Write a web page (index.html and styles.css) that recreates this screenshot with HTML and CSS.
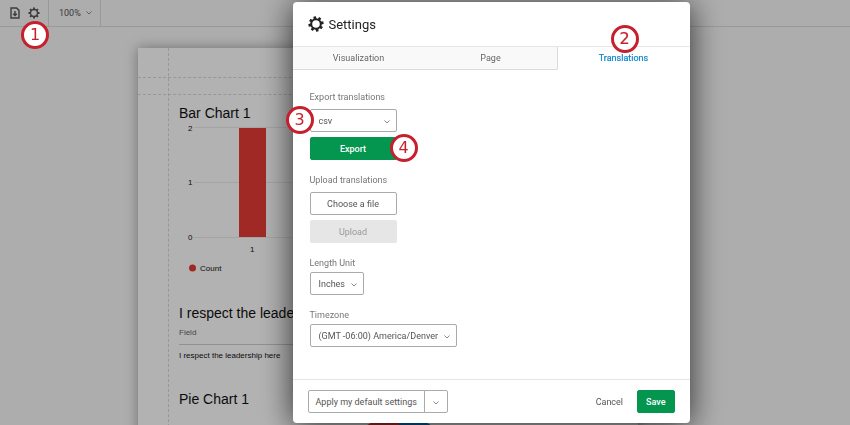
FILE: index.html
```html
<!DOCTYPE html>
<html lang="en">
<head>
    <meta charset="UTF-8">
    <meta name="viewport" content="width=device-width, initial-scale=1.0">
    <title>Report Settings</title>
    <link rel="stylesheet" href="styles.css">
</head>
<body>
    <!-- Report editor -->
    <header class="toolbar">
        <div class="tool-group">
            <button class="icon-btn" type="button" aria-label="Export report">
                <svg width="10" height="12" viewBox="0 0 10 12" fill="none" stroke="#585858" stroke-width="1.4">
                    <path d="M1 1h5.600L9 3.400V11H1z"/>
                    <path d="M5 4v4.400M3.200 6.800L5 8.600l1.800-1.800"/>
                </svg>
            </button>
            <button class="icon-btn" type="button" aria-label="Report settings">
                <svg width="12" height="12" viewBox="0 0 24 24" fill="none" stroke="#585858">
                    <circle cx="12" cy="12" r="7" stroke-width="2.8"/>
                    <path stroke-width="4" d="M12 1v4M12 19v4M1 12h4M19 12h4M4.200 4.200L7 7M17 17l2.800 2.800M4.200 19.800L7 17M17 7l2.800-2.800"/>
                </svg>
            </button>
        </div>
        <div class="tool-group">
            <button class="zoom-btn" type="button">100%
                <svg width="6" height="4" viewBox="0 0 6 4" fill="none" stroke="#888"><path d="M.5.5L3 3 5.500.5"/></svg>
            </button>
        </div>
    </header>

    <main class="canvas">
        <article class="sheet">
            <div class="sheet-content">
                <h2>Bar Chart 1</h2>
                <svg class="bar-chart" width="300" height="152" viewBox="0 0 300 152">
                    <path stroke="#ebebeb" d="M15 5.500h285M15 60.500h285M15 115.500h285"/>
                    <rect x="60" y="6" width="27" height="109" fill="#e53c36"/>
                    <circle cx="13.500" cy="146" r="3.500" fill="#e53c36"/>
                    <text x="9" y="9">2</text>
                    <text x="9" y="63">1</text>
                    <text x="9" y="118">0</text>
                    <text x="71" y="130">1</text>
                    <text x="21" y="149">Count</text>
                </svg>
                <h2>I respect the leader</h2>
                <table class="field-table">
                    <thead><tr><th>Field</th></tr></thead>
                    <tbody><tr><td>I respect the leadership here</td></tr></tbody>
                </table>
                <h2>Pie Chart 1</h2>
                <svg class="pie-chart" width="120" height="120" viewBox="0 0 120 120">
                    <path fill="#e53c36" d="M60 0a60 60 0 0 0 0 120z"/>
                    <path fill="#0a77c9" d="M60 0a60 60 0 0 1 0 120z"/>
                </svg>
            </div>
        </article>
    </main>

    <!-- Settings dialog -->
    <div class="overlay">
        <form class="modal" role="dialog" aria-labelledby="modal-title">
            <header class="modal-header">
                <svg width="16" height="16" viewBox="0 0 24 24" fill="none" stroke="#222">
                    <circle cx="12" cy="12" r="7.200" stroke-width="3"/>
                    <path stroke-width="4" d="M9.900 0.800L10.700 5M13.300 19l.8 4.200M.8 14.100L5 13.300M19 10.700l4.200-.8M2.800 5.700l3.500 2.400M17.700 15.900l3.500 2.400M5.700 21.200l2.400-3.500M15.900 6.300l2.400-3.500"/>
                </svg>
                <h1 id="modal-title">Settings</h1>
            </header>

            <nav class="tabs">
                <a class="tab" href="#visualization">Visualization</a>
                <a class="tab" href="#page">Page</a>
                <a class="tab active" href="#translations">Translations<span class="badge badge-tab">2</span></a>
            </nav>

            <section class="modal-body">
                <div class="group">
                    <label class="group-label spaced" for="format">Export translations</label>
                    <div class="actions">
                        <div class="select-wrap wide">
                            <select id="format"><option>csv</option></select>
                            <svg width="6" height="4" viewBox="0 0 6 4" fill="none" stroke="#888"><path d="M.5.5L3 3 5.500.5"/></svg>
                            <span class="badge badge-select">3</span>
                        </div>
                        <button class="btn btn-primary" type="button">Export<span class="badge badge-export">4</span></button>
                    </div>
                </div>

                <div class="group">
                    <label class="group-label spaced" for="choose-file">Upload translations</label>
                    <div class="actions">
                        <button class="btn" id="choose-file" type="button">Choose a file</button>
                        <button class="btn btn-disabled" type="button" disabled>Upload</button>
                    </div>
                </div>

                <div class="group">
                    <label class="group-label" for="unit">Length Unit</label>
                    <div class="select-wrap">
                        <select id="unit"><option>Inches</option></select>
                        <svg width="6" height="4" viewBox="0 0 6 4" fill="none" stroke="#888"><path d="M.5.5L3 3 5.500.5"/></svg>
                    </div>
                </div>

                <div class="group">
                    <label class="group-label" for="timezone">Timezone</label>
                    <div class="select-wrap">
                        <select id="timezone"><option>(GMT -06:00) America/Denver</option></select>
                        <svg width="6" height="4" viewBox="0 0 6 4" fill="none" stroke="#888"><path d="M.5.5L3 3 5.500.5"/></svg>
                    </div>
                </div>
            </section>

            <footer class="modal-footer">
                <div class="split-btn">
                    <button class="btn" type="button">Apply my default settings</button>
                    <button class="btn" type="button" aria-label="More default settings">
                        <svg width="6" height="4" viewBox="0 0 6 4" fill="none" stroke="#888"><path d="M.5.5L3 3 5.500.5"/></svg>
                    </button>
                </div>
                <div class="confirm">
                    <button class="btn btn-link" type="button">Cancel</button>
                    <button class="btn btn-primary" type="submit">Save</button>
                </div>
            </footer>
        </form>
    </div>

    <span class="badge badge-toolbar">1</span>
</body>
</html>
```
FILE: styles.css
```css
* {
    box-sizing: border-box;
}

body {
    margin: 0;
    height: 100vh;
    overflow: hidden;
    display: flex;
    flex-direction: column;
    background: #f8f8f8;
    font-family: Roboto, "Liberation Sans", sans-serif;
    font-size: 9px;
    color: #555;
}

button, select {
    font: inherit;
    color: inherit;
    cursor: pointer;
}

h1, h2 {
    margin: 0;
    font-weight: normal;
}

/* Toolbar */
.toolbar {
    display: flex;
    flex: none;
    height: 27px;
    border-bottom: 1px solid #dcdcdc;
}

.tool-group {
    display: flex;
    align-items: center;
    gap: 8px;
    padding: 0 8px 0 10px;
    border-right: 1px solid #dcdcdc;
}

.icon-btn, .zoom-btn {
    display: flex;
    align-items: center;
    gap: 5px;
    padding: 0;
    border: none;
    background: none;
}

/* Report page */
.canvas {
    flex: 1;
    padding: 21px 0 0 138px;
    overflow: hidden;
}

.sheet {
    position: relative;
    width: 500px;
    min-height: 660px;
    padding: 56px 41px;
    background: #fff;
    box-shadow: 0 0 12px rgba(0, 0, 0, 0.35);
    font-family: "Liberation Sans", Arial, sans-serif;
    color: #111;
}

/* Margin guides */
.sheet::before {
    content: "";
    position: absolute;
    top: 29px;
    left: 0;
    right: 0;
    height: 16px;
    border: dashed #d8d8d8;
    border-width: 1px 0;
}

.sheet::after {
    content: "";
    position: absolute;
    top: 0;
    bottom: 0;
    left: 30px;
    border-left: 1px dashed #d8d8d8;
}

.sheet-content h2 {
    font-size: 14px;
    line-height: 18px;
    white-space: nowrap;
}

.bar-chart {
    display: block;
    margin-bottom: 30px;
    font-size: 8px;
    fill: #111;
}

.field-table {
    width: 100%;
    margin-bottom: 24px;
    border-collapse: collapse;
    font-size: 8px;
    text-align: left;
}

.field-table th {
    height: 22px;
    padding: 0;
    border-bottom: 1px solid #d0d0d0;
    font-weight: normal;
    color: #666;
}

.field-table td {
    height: 22px;
    padding: 0;
}

.pie-chart {
    display: block;
    margin: 8px 0 0 160px;
}

/* Dialog */
.overlay {
    position: fixed;
    inset: 0;
    display: flex;
    justify-content: center;
    padding: 2px 0 2px 132px;
    background: rgba(0, 0, 0, 0.3);
}

.modal {
    display: flex;
    flex-direction: column;
    width: 100%;
    max-width: 397px;
    background: #fff;
    border-radius: 4px;
    box-shadow: 0 3px 32px rgba(0, 0, 0, 0.75);
}

.modal-header {
    display: flex;
    flex: none;
    align-items: center;
    gap: 5px;
    height: 44px;
    padding: 0 15px;
}

.modal-header h1 {
    font-size: 13px;
    color: #222;
}

.tabs {
    display: flex;
    border-top: 1px solid #e6e6e6;
}

.tab {
    position: relative;
    flex: 1;
    height: 23px;
    line-height: 23px;
    border-bottom: 1px solid #dcdcdc;
    background: #f9f9f9;
    color: #666;
    text-align: center;
    text-decoration: none;
}

.tab.active {
    border-left: 1px solid #dcdcdc;
    border-bottom-color: #fff;
    background: #fff;
    color: #0a84cc;
    -webkit-text-stroke: 0.2px;
}

.modal-body {
    flex: 1;
    padding: 21px 17px 0;
}

.group {
    margin-bottom: 14px;
}

.group-label {
    display: block;
    margin-bottom: 3px;
    line-height: 12px;
    color: #777;
}

.group-label.spaced {
    margin-bottom: 6px;
}

.actions {
    display: flex;
    flex-direction: column;
    gap: 5px;
    width: 87px;
}

.btn, .select-wrap select {
    height: 23px;
    border: 1px solid #aaa;
    border-radius: 2px;
    background: #fff;
}

.btn {
    position: relative;
    padding: 0 8px;
}

.btn-primary {
    border-color: #04954f;
    background: #04954f;
    color: #fff;
    font-weight: 500;
}

.btn-disabled {
    border-color: #e6e6e6;
    background: #e6e6e6;
    color: #999;
}

.btn-link {
    border-color: transparent;
    background: none;
}

.select-wrap {
    position: relative;
    display: flex;
    width: fit-content;
}

.select-wrap.wide {
    width: 100%;
}

.select-wrap select {
    width: 100%;
    padding: 0 17px 0 8px;
    appearance: none;
}

.select-wrap svg {
    position: absolute;
    top: 11px;
    right: 7px;
    pointer-events: none;
}

.modal-footer {
    display: flex;
    justify-content: space-between;
    padding: 10px 15px;
    border-top: 1px solid #e6e6e6;
}

.split-btn, .confirm {
    display: flex;
}

.split-btn .btn:first-child {
    padding: 0 7px;
    border-radius: 2px 0 0 2px;
}

.split-btn .btn:last-child {
    margin-left: -1px;
    border-radius: 0 2px 2px 0;
}

.confirm {
    gap: 5px;
}

/* Numbered step markers */
.badge {
    position: absolute;
    z-index: 2;
    width: 28px;
    height: 28px;
    border: 3px solid #c6202f;
    border-radius: 50%;
    background: #fff;
    color: #c6202f;
    font: 16px/22px "DejaVu Sans", sans-serif;
    text-align: center;
}

.badge-toolbar {
    top: 21px;
    left: 21px;
}

.badge-tab {
    top: -22px;
    left: calc(50% - 13px);
}

.badge-select {
    top: -3px;
    left: -24px;
}

.badge-export {
    top: -4px;
    right: -22px;
}
```
